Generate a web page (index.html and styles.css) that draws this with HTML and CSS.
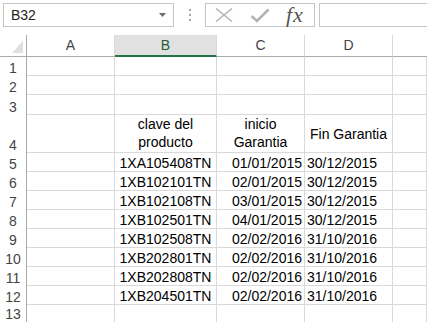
FILE: index.html
```html
<!DOCTYPE html>
<html lang="es">
<head>
<meta charset="utf-8">
<title>Hoja</title>
<link rel="stylesheet" href="styles.css">
</head>
<body>
<div class="fbar">
  <div class="namebox">
    <span class="name">B32</span>
    <svg class="arrow" width="7" height="4" viewBox="0 0 7 4"><path d="M0 0h7L3.5 4z" fill="#6d6d6d"/></svg>
  </div>
  <div class="dots"><i></i><i></i><i></i></div>
  <div class="fbtns">
    <svg class="ico-x" width="20" height="16" viewBox="0 0 20 16"><path d="M2 1.5L18 14.5M18 1.5L2 14.5" stroke="#b4b4b4" stroke-width="1.6" fill="none"/></svg>
    <svg class="ico-ok" width="20" height="16" viewBox="0 0 20 16"><path d="M1.5 9L7 14L18.5 2.5" stroke="#b4b4b4" stroke-width="2.6" fill="none"/></svg>
    <span class="fx">fx</span>
  </div>
  <div class="finput"></div>
</div>
<div class="sheet">
  <div class="ch corner"><span class="tri"></span></div>
  <div class="ch">A</div>
  <div class="ch sel">B</div>
  <div class="ch">C</div>
  <div class="ch">D</div>
  <div class="ch last"></div>

  <div class="rh">1</div><div class="c"></div><div class="c"></div><div class="c"></div><div class="c"></div><div class="c"></div>
  <div class="rh">2</div><div class="c"></div><div class="c"></div><div class="c"></div><div class="c"></div><div class="c"></div>
  <div class="rh">3</div><div class="c"></div><div class="c"></div><div class="c"></div><div class="c"></div><div class="c"></div>
  <div class="rh">4</div><div class="c"></div><div class="c ctr wrap">clave del producto</div><div class="c ctr wrap">inicio Garantia</div><div class="c ctr mid">Fin Garantia</div><div class="c"></div>

  <div class="rh">5</div><div class="c"></div><div class="c ctr">1XA105408TN</div><div class="c r">01/01/2015</div><div class="c">30/12/2015</div><div class="c"></div>
  <div class="rh">6</div><div class="c"></div><div class="c ctr">1XB102101TN</div><div class="c r">02/01/2015</div><div class="c">30/12/2015</div><div class="c"></div>
  <div class="rh">7</div><div class="c"></div><div class="c ctr">1XB102108TN</div><div class="c r">03/01/2015</div><div class="c">30/12/2015</div><div class="c"></div>
  <div class="rh">8</div><div class="c"></div><div class="c ctr">1XB102501TN</div><div class="c r">04/01/2015</div><div class="c">30/12/2015</div><div class="c"></div>
  <div class="rh">9</div><div class="c"></div><div class="c ctr">1XB102508TN</div><div class="c r">02/02/2016</div><div class="c">31/10/2016</div><div class="c"></div>
  <div class="rh">10</div><div class="c"></div><div class="c ctr">1XB202801TN</div><div class="c r">02/02/2016</div><div class="c">31/10/2016</div><div class="c"></div>
  <div class="rh">11</div><div class="c"></div><div class="c ctr">1XB202808TN</div><div class="c r">02/02/2016</div><div class="c">31/10/2016</div><div class="c"></div>
  <div class="rh">12</div><div class="c"></div><div class="c ctr">1XB204501TN</div><div class="c r">02/02/2016</div><div class="c">31/10/2016</div><div class="c"></div>
  <div class="rh cut">13</div><div class="c"></div><div class="c"></div><div class="c"></div><div class="c"></div><div class="c"></div>
</div>
</body>
</html>
```
FILE: styles.css
```css
html, body {
  margin: 0;
  padding: 0;
  background: #ffffff;
  overflow: hidden;
}
body {
  width: 427px;
  height: 322px;
  font-family: "Liberation Sans", Arial, sans-serif;
  font-size: 14px;
  color: #000;
}
.fbar {
  display: flex;
  align-items: flex-start;
  height: 35px;
  box-sizing: border-box;
  padding: 3px 0 0 3px;
}
.namebox {
  width: 171px;
  height: 24px;
  box-sizing: border-box;
  border: 1px solid #c6c6c6;
  display: flex;
  align-items: center;
  justify-content: space-between;
  padding: 0 7px 0 7px;
}
.name {
  color: #222;
  font-size: 14px;
}
.arrow { display: block; }
.dots {
  width: 31px;
  height: 24px;
  display: flex;
  flex-direction: column;
  align-items: center;
  justify-content: center;
  gap: 3px;
}
.dots i {
  display: block;
  width: 2px;
  height: 2px;
  background: #a6a6a6;
}
.fbtns {
  width: 110px;
  height: 24px;
  box-sizing: border-box;
  border: 1px solid #c6c6c6;
  display: flex;
  align-items: center;
  padding-left: 8px;
}
.ico-x { display: block; }
.ico-ok { display: block; margin-left: 16px; }
.fx {
  margin-left: 16px;
  font-family: "Liberation Serif", "Times New Roman", serif;
  font-style: italic;
  font-size: 22px;
  line-height: 22px;
  letter-spacing: 1px;
  color: #555;
}
.finput {
  flex: 1;
  height: 24px;
  box-sizing: border-box;
  border: 1px solid #c6c6c6;
  border-right: none;
  margin-left: 4px;
}
.sheet {
  display: grid;
  grid-template-columns: 27px 88px 102px 88px 88px 1fr;
  grid-template-rows: 22px 19px 19px 20px 38px repeat(9, 19px);
}
.sheet > div {
  box-sizing: border-box;
  white-space: nowrap;
  overflow: hidden;
}
.ch {
  border-right: 1px solid #d9d9d9;
  border-bottom: 1px solid #ababab;
  text-align: center;
  line-height: 21px;
  color: #444;
  background: #fff;
}
.ch.corner {
  position: relative;
  border-right: 1px solid #ababab;
}
.tri {
  position: absolute;
  right: 3px;
  bottom: 3px;
  width: 0;
  height: 0;
  border-left: 11px solid transparent;
  border-bottom: 12px solid #dfdfdf;
}
.ch.sel {
  background: #e1e1e1;
  border-bottom: 2px solid #217346;
  color: #1f5c36;
  line-height: 20px;
}
.ch.last { border-right: none; }
.rh {
  border-right: 1px solid #ababab;
  text-align: center;
  color: #444;
  display: flex;
  align-items: flex-end;
  justify-content: center;
  line-height: 16px;
}
.rh.cut { padding-bottom: 2px; }
.c {
  border-right: 1px solid #d9d9d9;
  border-bottom: 1px solid #d9d9d9;
  display: flex;
  align-items: flex-end;
  padding: 0 2px;
  line-height: 16px;
}
.c.ctr { justify-content: center; text-align: center; }
.c.r { justify-content: flex-end; }
.c.wrap { white-space: normal; line-height: 17.5px; padding-bottom: 1px; }
.c.mid { align-items: center; }
```
